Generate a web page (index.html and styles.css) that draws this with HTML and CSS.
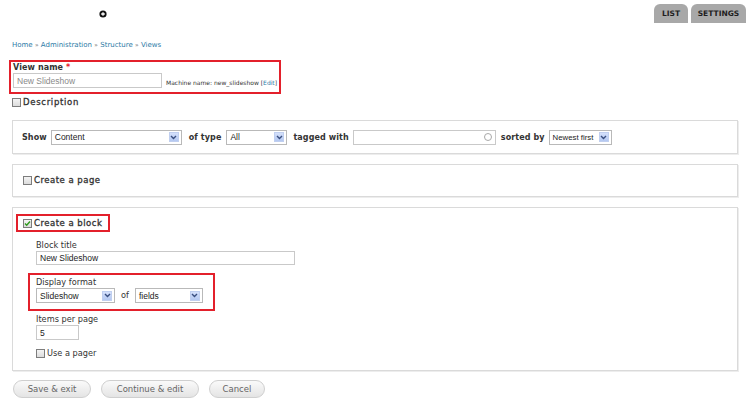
FILE: index.html
```html
<!DOCTYPE html>
<html>
<head>
<meta charset="utf-8">
<link rel="stylesheet" href="styles.css">
</head>
<body>
<div class="header">
  <span class="plus-icon"><svg width="8" height="8" viewBox="0 0 8 8"><circle cx="4" cy="4" r="3.6" fill="#111"/><path d="M4 2.2v3.6M2.2 4h3.6" stroke="#fff" stroke-width="1.3"/></svg></span>
  <div class="tabs">
    <span class="tab tab-list">LIST</span>
    <span class="tab tab-settings">SETTINGS</span>
  </div>
</div>
<div class="page">
  <div class="breadcrumb"><a>Home</a> <span class="sep">»</span> <a>Administration</a> <span class="sep">»</span> <a>Structure</a> <span class="sep">»</span> <a>Views</a></div>

  <div class="hl hl-name">
    <div class="label-strong">View name <span class="req">*</span></div>
    <div class="name-row">
      <div class="input input-name placeholder">New Slideshow</div>
      <span class="machine">Machine name: new_slideshow [<a>Edit</a>]</span>
    </div>
  </div>

  <div class="check-row desc-row"><span class="cb"></span><span class="label-strong">Description</span></div>

  <div class="fieldset fs-show">
    <span class="label-strong">Show</span>
    <div class="select sel-content"><span>Content</span><span class="arrow"><svg width="7" height="5" viewBox="0 0 7 5"><path d="M1 1l2.5 2.5L6 1" fill="none" stroke="#3a4f80" stroke-width="1.4"/></svg></span></div>
    <span class="label-strong lbl-type">of type</span>
    <div class="select sel-type"><span>All</span><span class="arrow"><svg width="7" height="5" viewBox="0 0 7 5"><path d="M1 1l2.5 2.5L6 1" fill="none" stroke="#3a4f80" stroke-width="1.4"/></svg></span></div>
    <span class="label-strong lbl-tagged">tagged with</span>
    <div class="input input-tag"><span class="throbber"></span></div>
    <span class="label-strong lbl-sorted">sorted by</span>
    <div class="select sel-sort"><span>Newest first</span><span class="arrow"><svg width="7" height="5" viewBox="0 0 7 5"><path d="M1 1l2.5 2.5L6 1" fill="none" stroke="#3a4f80" stroke-width="1.4"/></svg></span></div>
  </div>

  <div class="fieldset fs-page">
    <div class="check-row"><span class="cb"></span><span class="label-strong">Create a page</span></div>
  </div>

  <div class="fieldset fs-block">
    <div class="hl hl-block">
      <div class="check-row"><span class="cb checked"><svg width="7" height="7" viewBox="0 0 7 7"><path d="M1 3.6l1.7 1.7L6 1.5" fill="none" stroke="#2f9a1e" stroke-width="1.4"/></svg></span><span class="label-strong">Create a block</span></div>
    </div>
    <div class="block-body">
      <div class="label lbl-title">Block title</div>
      <div class="input input-title">New Slideshow</div>
      <div class="hl hl-format">
        <div class="label">Display format</div>
        <div class="format-row">
          <div class="select sel-style"><span>Slideshow</span><span class="arrow"><svg width="7" height="5" viewBox="0 0 7 5"><path d="M1 1l2.5 2.5L6 1" fill="none" stroke="#3a4f80" stroke-width="1.4"/></svg></span></div>
          <span class="label of">of</span>
          <div class="select sel-fields"><span>fields</span><span class="arrow"><svg width="7" height="5" viewBox="0 0 7 5"><path d="M1 1l2.5 2.5L6 1" fill="none" stroke="#3a4f80" stroke-width="1.4"/></svg></span></div>
        </div>
      </div>
      <div class="label lbl-items">Items per page</div>
      <div class="input input-items">5</div>
      <div class="check-row pager-row"><span class="cb"></span><span class="label">Use a pager</span></div>
    </div>
  </div>

  <div class="actions">
    <span class="btn btn-save">Save &amp; exit</span>
    <span class="btn btn-continue">Continue &amp; edit</span>
    <span class="btn btn-cancel">Cancel</span>
  </div>
</div>
</body>
</html>
```
FILE: styles.css
```css
* { box-sizing: border-box; }
body {
  margin: 0;
  background: #fff;
  font-family: "DejaVu Sans", Verdana, sans-serif;
  color: #333;
  width: 750px;
  height: 406px;
  overflow: hidden;
}
a { color: #2c7aa6; text-decoration: none; }

.header {
  height: 38px;
  display: flex;
  justify-content: space-between;
  align-items: flex-start;
  padding-left: 99px;
  padding-right: 4px;
}
.plus-icon { display: block; margin-top: 10px; height: 8px; }
.plus-icon svg { display: block; }
.tabs { display: flex; gap: 3px; margin-top: 4px; }
.tab {
  display: flex;
  align-items: center;
  justify-content: center;
  height: 19px;
  background: #a8a8a8;
  border-radius: 6px 6px 0 0;
  font-weight: bold;
  font-size: 7.5px;
  color: #1e1e1e;
}
.tab-list { width: 34px; }
.tab-settings { width: 55px; }

.page { padding: 0 12px; }

.breadcrumb {
  margin-top: 2px;
  height: 10px;
  line-height: 10px;
  font-size: 7px;
}
.breadcrumb .sep { color: #555; font-size: 6px; }

.hl { border: 2px solid #e3202b; }
.hl-name {
  margin-top: 10px;
  margin-left: -3px;
  width: 272px;
  height: 34px;
  padding: 1px 0 0 2px;
}
.label-strong {
  font-weight: bold;
  font-size: 8px;
  letter-spacing: 0.1px;
  color: #333;
  line-height: 9px;
}
.req { color: #e3202b; }
.name-row { display: flex; align-items: center; margin-top: 1px; }
.input {
  border: 1px solid #c9c9c9;
  background: #fff;
  font-family: "Liberation Sans", Arial, sans-serif;
  font-size: 8.5px;
  color: #222;
  padding-left: 3px;
  display: flex;
  align-items: center;
}
.placeholder { color: #8a8a8a; }
.input-name { width: 149px; height: 15px; }
.machine {
  margin-left: 4px;
  font-size: 6px;
  color: #333;
  margin-top: 3px;
}

.check-row { display: flex; align-items: center; }
.cb {
  width: 9px;
  height: 9px;
  border: 1px solid #7d7d7d;
  background: linear-gradient(#f4f4f4, #dcdcdc);
  margin-right: 2px;
  display: flex;
  align-items: center;
  justify-content: center;
  flex: none;
}
.cb svg { display: block; }
.desc-row { margin-top: 3px; height: 10px; }
.desc-row .label-strong { font-size: 8.5px; letter-spacing: 0.7px; font-weight: normal; -webkit-text-stroke: 0.3px #333; }

.fieldset {
  border: 1px solid #dadada;
  box-shadow: 1px 1px 0 #ededed;
  width: 726px;
}
.fs-show {
  margin-top: 13px;
  height: 34px;
  display: flex;
  align-items: center;
  padding-left: 9px;
}
.select {
  height: 15px;
  border: 1px solid #b9b9b9;
  background: #fff;
  display: flex;
  align-items: center;
  justify-content: space-between;
  padding: 0 2px 0 3px;
  font-family: "Liberation Sans", Arial, sans-serif;
  font-size: 8.5px;
  color: #222;
}
.arrow {
  width: 10px;
  height: 10px;
  background: linear-gradient(#d4e0fb, #b4c8f1);
  border: 1px solid #c0cff0;
  display: flex;
  align-items: center;
  justify-content: center;
  flex: none;
}
.arrow svg { display: block; }
.sel-content { width: 131px; margin-left: 4px; }
.lbl-type { margin-left: 7px; }
.sel-type { width: 61px; margin-left: 5px; }
.lbl-tagged { margin-left: 6px; }
.input-tag { width: 143px; height: 15px; margin-left: 4px; justify-content: flex-end; padding-right: 3px; }
.throbber {
  width: 8px;
  height: 8px;
  border: 1px solid #a8a8a8;
  border-radius: 50%;
}
.lbl-sorted { margin-left: 5px; }
.sel-sort { width: 63px; margin-left: 4px; font-size: 7.8px; }

.fs-page {
  margin-top: 10px;
  height: 33px;
  padding-left: 10px;
  display: flex;
  align-items: center;
}
.fs-page .label-strong, .hl-block .label-strong { font-size: 8.5px; letter-spacing: 0.5px; font-weight: normal; -webkit-text-stroke: 0.3px #333; }

.fs-block {
  margin-top: 10px;
  height: 164px;
  padding: 6px 0 0 3px;
}
.hl-block {
  width: 94px;
  height: 18px;
  padding-left: 5px;
  display: flex;
  align-items: center;
}
.block-body { padding-left: 20px; }
.label { font-size: 8.2px; color: #333; line-height: 9px; }
.lbl-title { margin-top: 9px; }
.input-title { width: 259px; height: 14px; margin-top: 1px; }
.hl-format {
  margin-top: 8px;
  margin-left: -8px;
  width: 187px;
  height: 38px;
  padding: 3px 0 0 6px;
}
.format-row { display: flex; align-items: center; margin-top: 1px; }
.sel-style { width: 79px; }
.of { margin: 0 6px; }
.sel-fields { width: 68px; }
.lbl-items { margin-top: 4px; }
.input-items { width: 43px; height: 15px; margin-top: 1px; }
.pager-row { margin-top: 9px; }

.actions { display: flex; gap: 10px; margin-top: 9px; padding-left: 1px; }
.btn {
  height: 18px;
  border: 1px solid #cfcfcf;
  border-radius: 9px;
  background: linear-gradient(#fafafa, #e4e4e4);
  display: flex;
  align-items: center;
  justify-content: center;
  font-size: 8.5px;
  color: #666;
}
.btn-save { width: 78px; }
.btn-continue { width: 98px; }
.btn-cancel { width: 56px; }
```
